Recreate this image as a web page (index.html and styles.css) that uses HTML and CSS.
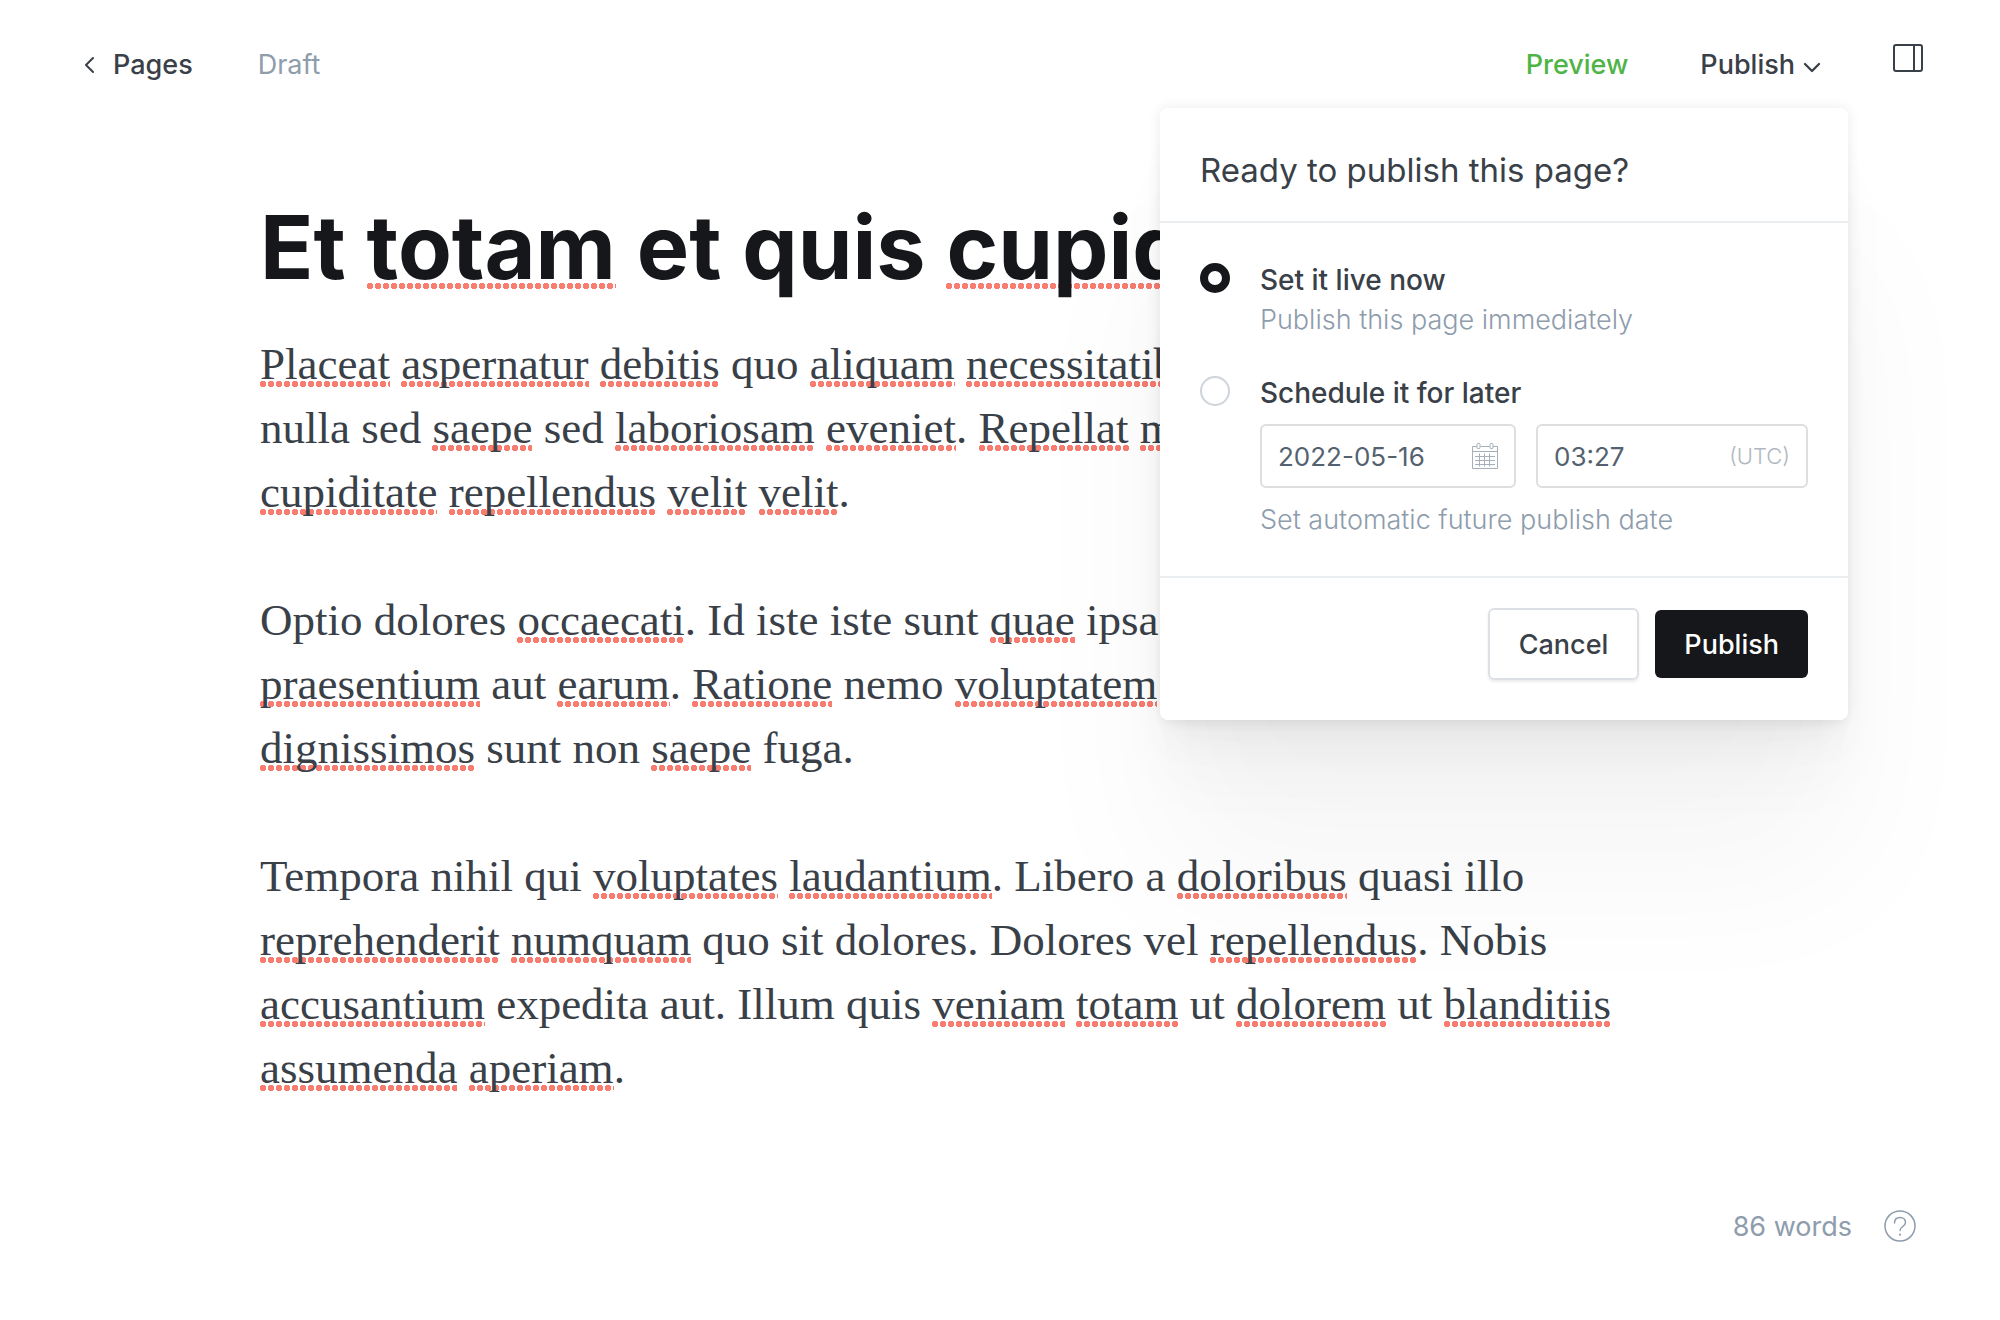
FILE: index.html
```html
<!DOCTYPE html>
<html lang="en">
<head>
<meta charset="utf-8">
<title>Edit page</title>
<link rel="stylesheet" href="styles.css">
</head>
<body>
<div class="editor">
  <header class="topbar">
    <nav class="crumbs">
      <a class="back" href="#pages">
        <svg class="back-icon" viewBox="0 0 10 18" fill="none" stroke="currentColor" stroke-width="2" stroke-linecap="round" stroke-linejoin="round" aria-hidden="true"><path d="M9 2 2 9l7 7"/></svg>
        Pages
      </a>
      <span class="status">Draft</span>
    </nav>
    <div class="actions">
      <button class="action preview" type="button">Preview</button>
      <div class="publish-menu">
        <button class="action publish" type="button" aria-expanded="true">Publish
          <svg class="caret" viewBox="0 0 18 12" fill="none" stroke="currentColor" stroke-width="2.300" stroke-linecap="round" stroke-linejoin="round" aria-hidden="true"><path d="m2 2 7 7 7-7"/></svg>
        </button>
        <form class="popover">
          <h2 class="popover-title">Ready to publish this page?</h2>
          <div class="options">
            <div class="option">
              <input class="radio" type="radio" name="when" id="now" checked>
              <div class="option-body">
                <label class="option-label" for="now">Set it live now</label>
                <p class="hint">Publish this page immediately</p>
              </div>
            </div>
            <div class="option">
              <input class="radio" type="radio" name="when" id="later">
              <div class="option-body">
                <label class="option-label" for="later">Schedule it for later</label>
                <div class="fields">
                  <div class="field field-date">
                    <input class="field-input" type="text" value="2022-05-16" aria-label="Publish date">
                    <svg class="calendar" viewBox="0 0 26 26" fill="none" stroke="currentColor" stroke-width="1" aria-hidden="true"><path d="M5 3.500H.5v22h25v-22H21M8.500 3.500h9M.5 8.500h25"/><rect x="5" y=".5" width="3" height="5" rx="1"/><rect x="18" y=".5" width="3" height="5" rx="1"/><path d="M3 13.500h20M3 17.500h20M3 21.500h20M7.500 10.500v13M12.500 10.500v13M17.500 10.500v13"/></svg>
                  </div>
                  <div class="field field-time">
                    <input class="field-input" type="text" value="03:27" aria-label="Publish time">
                    <span class="zone">(UTC)</span>
                  </div>
                </div>
                <p class="hint">Set automatic future publish date</p>
              </div>
            </div>
          </div>
          <div class="popover-footer">
            <button class="button button-cancel" type="button">Cancel</button>
            <button class="button button-publish" type="submit">Publish</button>
          </div>
        </form>
      </div>
      <button class="sidebar-toggle" type="button" aria-label="Settings">
        <svg class="sidebar-icon" viewBox="0 0 30 28" fill="none" stroke="currentColor" stroke-width="2" aria-hidden="true"><rect x="1" y="1" width="28" height="26" rx="2"/><path d="M21 1v26"/></svg>
      </button>
    </div>
  </header>
  <main class="document">
    <h1 class="title">Et <span class="typo">totam</span> et quis <span class="typo">cupid</span></h1>
    <p><span class="typo">Placeat</span> <span class="typo">aspernatur</span> <span class="typo">debitis</span> quo <span class="typo">aliquam</span> <span class="typo">necessitatib</span><br>
    nulla sed <span class="typo">saepe</span> sed <span class="typo">laboriosam</span> <span class="typo">eveniet</span>. <span class="typo">Repellat</span> <span class="typo">m</span><br>
    <span class="typo">cupiditate</span> <span class="typo">repellendus</span> <span class="typo">velit</span> <span class="typo">velit</span>.</p>
    <p>Optio dolores <span class="typo">occaecati</span>. Id iste iste sunt <span class="typo">quae</span> ipsa c<br>
    <span class="typo">praesentium</span> aut <span class="typo">earum</span>. <span class="typo">Ratione</span> nemo <span class="typo">voluptatem</span><br>
    <span class="typo">dignissimos</span> sunt non <span class="typo">saepe</span> fuga.</p>
    <p>Tempora nihil qui <span class="typo">voluptates</span> <span class="typo">laudantium</span>. Libero a <span class="typo">doloribus</span> quasi illo<br>
    <span class="typo">reprehenderit</span> <span class="typo">numquam</span> quo sit dolores. Dolores vel <span class="typo">repellendus</span>. Nobis<br>
    <span class="typo">accusantium</span> expedita aut. Illum quis <span class="typo">veniam</span> <span class="typo">totam</span> ut <span class="typo">dolorem</span> ut <span class="typo">blanditiis</span><br>
    <span class="typo">assumenda</span> <span class="typo">aperiam</span>.</p>
  </main>
  <footer class="bottombar">
    <span class="count">86 words</span>
    <a class="help" href="#help" aria-label="Help">
      <svg class="help-icon" viewBox="0 0 32 32" fill="none" stroke="currentColor" stroke-width="1.500" stroke-linecap="round" aria-hidden="true"><circle cx="16" cy="16" r="15"/><path d="M10.500 13c0-3.500 2.300-5.500 5.500-5.500s5.500 2 5.500 5c0 4-5.500 4-5.500 8"/><path d="M16 24.500v.3" stroke-width="2"/></svg>
    </a>
  </footer>
</div>
</body>
</html>
```
FILE: styles.css
```css
* { box-sizing: border-box; }

body {
  margin: 0;
  background: #fff;
  color: #394047;
  font-family: Inter, "Liberation Sans", sans-serif;
  font-size: 27px;
  line-height: 32px;
}

h1, h2, p { margin: 0; }

button {
  padding: 0;
  border: 0;
  background: none;
  color: inherit;
  font: inherit;
  cursor: pointer;
}

svg { display: block; }

.editor {
  display: flex;
  flex-direction: column;
  min-height: 100vh;
}

/* Top bar */
.topbar {
  display: flex;
  justify-content: space-between;
  padding: 49px 77px 0 84px;
}

.crumbs, .actions { display: flex; align-items: flex-start; }
.crumbs { gap: 65px; }

.back {
  display: flex;
  align-items: center;
  gap: 19px;
  color: inherit;
  font-weight: 500;
  text-decoration: none;
}

.back-icon { width: 10px; height: 18px; }
.status { color: #8e9cac; }

.action {
  display: flex;
  align-items: baseline;
  gap: 8px;
  font-weight: 500;
}

.preview { color: #4fb446; }
.caret { width: 18px; height: 12px; }

.actions { gap: 72px; }
.publish-menu { position: relative; }
.sidebar-icon { width: 30px; height: 28px; }
.sidebar-toggle { margin-top: -5px; }

/* Publish popover */
.popover {
  position: absolute;
  z-index: 1;
  top: 59px;
  right: -27px;
  width: 688px;
  border-radius: 8px;
  background: #fff;
  box-shadow:
    0 0 14px rgba(0, 0, 0, .08),
    0 4px 4px -5px rgba(0, 0, 0, .011),
    0 10px 11px -5px rgba(0, 0, 0, .016),
    0 19px 20px -5px rgba(0, 0, 0, .02),
    0 34px 36px -5px rgba(0, 0, 0, .024),
    0 64px 67px -5px rgba(0, 0, 0, .029),
    0 152px 160px rgba(0, 0, 0, .04);
}

.popover-title {
  padding: 46px 40px 35px;
  border-bottom: 2px solid #ebeef0;
  font-size: 33px;
  font-weight: 400;
  line-height: 32px;
}

.options {
  display: flex;
  flex-direction: column;
  gap: 40px;
  padding: 40px;
}

.option { display: flex; gap: 30px; }

.radio {
  flex: none;
  width: 30px;
  height: 30px;
  margin: 0;
  appearance: none;
  border: 2px solid #ced4d9;
  border-radius: 50%;
  background: #fff;
}

.radio:checked { border: 8px solid #15171a; }

.option-body { flex: 1; min-width: 0; padding-top: 1px; }

.option-label {
  display: block;
  font-size: 28px;
  font-weight: 500;
}

.hint {
  padding-top: 8px;
  color: #8e9cac;
  font-weight: 300;
}

.fields {
  display: flex;
  gap: 20px;
  padding: 15px 0 8px;
}

.field {
  display: flex;
  align-items: center;
  min-width: 0;
  height: 64px;
  padding: 0 16px;
  border: 2px solid #dddedf;
  border-radius: 6px;
}

.field-date { flex: 0 1 256px; }
.field-time { flex: 1; }

.field-input {
  flex: 1;
  width: 100%;
  min-width: 0;
  padding: 2px 0 0;
  border: 0;
  outline: 0;
  background: none;
  color: #54626f;
  font: inherit;
  font-size: 26px;
}

.calendar { flex: none; width: 26px; height: 26px; color: #a5afb9; }

.zone {
  color: #afb8c1;
  font-size: 22px;
  font-weight: 300;
}

.popover-footer {
  display: flex;
  justify-content: flex-end;
  align-items: center;
  gap: 16px;
  padding: 30px 40px 40px;
  border-top: 2px solid #ebeef0;
}

.button {
  height: 68px;
  padding: 2px 29px 0;
  border-radius: 6px;
  font-weight: 500;
}

.button-cancel {
  height: 72px;
  border: 2px solid #dde1e5;
  box-shadow: 0 2px 3px rgba(0, 0, 0, .08);
}

.button-publish { background: #15171a; color: #fff; }

/* Document */
.document {
  flex: 1;
  padding: 112px 260px 0;
  font-family: Georgia, "Liberation Serif", serif;
  font-size: 45px;
  line-height: 64px;
  white-space: nowrap;
}

.document p { margin-bottom: 64px; }

.title {
  margin-bottom: 31px;
  color: #15171a;
  font-family: Inter, "Liberation Sans", sans-serif;
  font-size: 88px;
  font-weight: 700;
  line-height: 108px;
}

/* Spelling marks */
.typo {
  background: radial-gradient(circle at 3px 3px, #f87c70 0 3px, #f87c7000 3px) 0 calc(100% - 2px) / 8px 6px repeat-x;
}

.title .typo { background-position: 0 calc(100% - 11px); }

/* Bottom bar */
.bottombar {
  display: flex;
  justify-content: flex-end;
  align-items: center;
  gap: 32px;
  padding: 0 84px 77px;
  color: #8e9cac;
}

.count { padding-top: 2px; }
.help { color: inherit; }
.help-icon { width: 32px; height: 32px; }
```
